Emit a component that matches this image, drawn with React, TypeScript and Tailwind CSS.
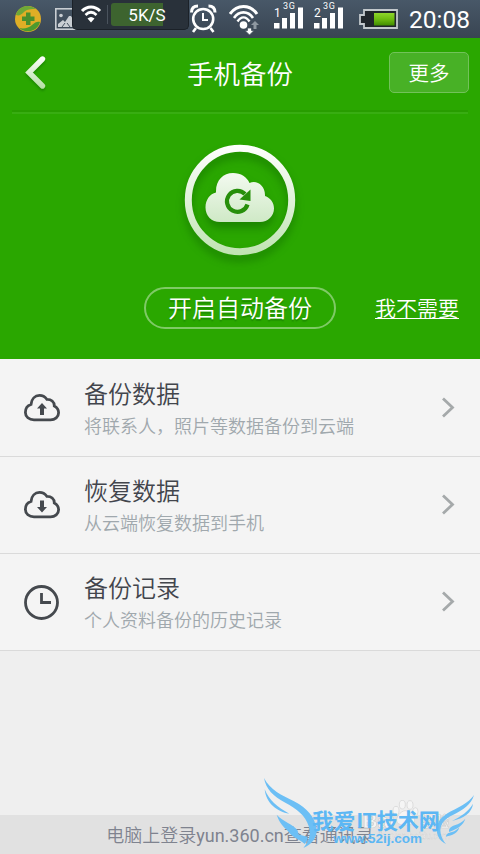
import React from 'react';

type IconName = 'upload' | 'download' | 'clock';

interface MenuItem {
  icon: IconName;
  title: string;
  description: string;
}

const menuItems: MenuItem[] = [
  { icon: 'upload', title: '备份数据', description: '将联系人，照片等数据备份到云端' },
  { icon: 'download', title: '恢复数据', description: '从云端恢复数据到手机' },
  { icon: 'clock', title: '备份记录', description: '个人资料备份的历史记录' },
];

const SignalBars: React.FC<{ sim: string }> = ({ sim }) => (
  <svg className="w-[30px] h-[38px] shrink-0" viewBox="0 0 30 38" fill="#fff">
    <text x="0" y="16.500" fontSize="12" fontFamily="Roboto, sans-serif">
      {sim}
    </text>
    <text x="9" y="9" fontSize="9" letterSpacing="0.8" fontFamily="Roboto, sans-serif">
      3G
    </text>
    <rect x="0" y="23" width="5.5" height="5.5" />
    <rect x="8" y="18" width="5" height="10.5" />
    <rect x="16" y="13" width="5" height="15.5" />
    <rect x="24" y="7.5" width="5" height="21" />
  </svg>
);

const StatusBar = () => (
  <div className="relative h-[38px] shrink-0 bg-gradient-to-b from-[#485868] to-[#394552] text-white flex items-start">
    {/* 360 shield */}
    <svg className="ml-[15px] w-[26px] h-[38px] shrink-0" viewBox="0 0 26 38">
      <circle cx="13" cy="19" r="13" fill="#dfae26" />
      <path d="M1 15C3 7 12 3 21 9C16 9 12 9 9 12C6 15 4 16 1 15Z" fill="#6ea838" />
      <path d="M25 22C23 30 13 35 4 28C9 29 14 28 17 25C20 22 23 21 25 22Z" fill="#4b9a2e" />
      <path d="M11 12.500h4.500v4h4v4.500h-4v4h-4.500v-4h-4v-4.500h4Z" fill="#4a8f2c" />
    </svg>
    <svg className="ml-[14px] w-[22px] h-[38px] shrink-0" viewBox="0 0 22 38">
      <rect x="0.8" y="8.8" width="20.4" height="20.4" fill="none" stroke="#c9ced3" strokeWidth="1.6" />
      <circle cx="6" cy="15.5" r="1.8" fill="#c9ced3" />
      <path d="M3 27V24L8 20L10 22L14 16L16 16L19 21V27Z" fill="#c9ced3" />
      <path d="M7 27l3-4M12 23l3 4" stroke="#465361" strokeWidth="1" />
    </svg>

    {/* Alarm */}
    <svg className="ml-[113px] w-[27px] h-[38px] shrink-0" viewBox="0 0 27 38" fill="none" stroke="#fff">
      <circle cx="13.2" cy="19" r="10" strokeWidth="2.6" />
      <path d="M13 13v7h5" strokeWidth="2" />
      <path d="M1.5 12.5C1.5 8 4 6 8 6M25 12.5C25 8 22.500 6 18.500 6" strokeWidth="3" />
      <path d="M6 28L3 32M20.500 28L23.500 32" strokeWidth="2.6" />
    </svg>

    {/* Wifi with transfer arrows */}
    <svg className="ml-[12px] w-[30px] h-[38px] shrink-0" viewBox="0 0 30 38" fill="none" stroke="#fff">
      <path d="M1 14C8 4 21 4 28 14" strokeWidth="3" />
      <path d="M5 18C10 10.500 19 10.500 24 18" strokeWidth="2.6" />
      <path d="M8.500 21.500C12 16 17 16 20.500 21.500" strokeWidth="2.400" />
      <circle cx="14.500" cy="25" r="3.800" fill="#fff" stroke="none" />
      <path d="M18.500 28h4v2.500h2.500l-4.500 4.500l-4.500-4.500h2.500Z" fill="#fff" stroke="#465361" strokeWidth="0.800" />
      <path d="M24.500 29v-4h-2.500l4-4l4 4h-2.500v4Z" fill="#8e98a1" stroke="none" />
    </svg>

    <div className="ml-[15px] flex gap-[10px]">
      <SignalBars sim="1" />
      <SignalBars sim="2" />
    </div>

    {/* Battery */}
    <svg className="ml-[15px] w-[40px] h-[38px] shrink-0" viewBox="0 0 40 38">
      <defs>
        <linearGradient id="charge" x1="0" y1="0" x2="0" y2="1">
          <stop offset="0" stopColor="#8fd62b" />
          <stop offset="0.5" stopColor="#6dbb10" />
          <stop offset="1" stopColor="#408c00" />
        </linearGradient>
      </defs>
      <path d="M5 10h33v18H5v-4H1v-9h4Z" fill="#20262b" stroke="#c2c8cc" strokeWidth="1.8" />
      <rect x="15" y="13" width="20.500" height="12.500" fill="url(#charge)" />
    </svg>

    <span className="ml-[10px] font-[Roboto] text-[24.500px] leading-[40px] whitespace-nowrap">20:08</span>

    {/* Floating network speed meter */}
    <div className="absolute left-[72px] top-0 w-[117px] h-[30px] rounded-b-[5px] border border-t-0 border-[#1b2128] bg-[#29313a] flex items-start">
      <svg className="ml-[7px] mt-[4px] w-[22px] h-[20px]" viewBox="0 0 22 20" fill="none" stroke="#fff">
        <path d="M2 7C7 1.500 15 1.500 20 7" strokeWidth="3" />
        <path d="M5.500 11C9 7.500 13 7.500 16.500 11" strokeWidth="2.600" />
        <path d="M7.500 14.500C10 12.500 12 12.500 14.500 14.500L11 18.500Z" fill="#fff" stroke="none" />
      </svg>
      <div className="ml-[5px] mt-[5px] h-[19px] w-px bg-[#4a535d]" />
      <div className="ml-[3px] mt-[3px] h-[23px] w-[73px] rounded-[3px] bg-gradient-to-r from-[#3d642f] from-[71%] to-[#29313a] to-[71%] pr-px text-center font-[Roboto] text-[17px] leading-[25px]">
        5K/S
      </div>
    </div>
  </div>
);

const Header = () => (
  <header className="h-[76px] grid grid-cols-[1fr_auto_1fr] items-start text-white">
    <svg className="ml-[20px] mt-[12px] w-[32px] h-[48px]" viewBox="0 0 32 48">
      <defs>
        <linearGradient id="arrow" gradientUnits="userSpaceOnUse" x1="0" y1="6" x2="0" y2="38">
          <stop offset="0" stopColor="#fff" />
          <stop offset="1" stopColor="#b5dfa5" />
        </linearGradient>
      </defs>
      <path
        d="M22.500 9L9 22.500L22.500 36"
        fill="none"
        stroke="url(#arrow)"
        strokeWidth="5.400"
        strokeLinecap="round"
        className="drop-shadow-[0_2px_1px_rgba(0,80,0,0.35)]"
      />
    </svg>
    <h1 className="text-[26.500px] leading-[73px] font-[350]">手机备份</h1>
    <button className="mr-[11px] mt-[14px] w-[80px] h-[41px] justify-self-end rounded-[5px] border border-[#72c25a] bg-[#48b126] text-[20.500px] leading-[43px] font-[350]">
      更多
    </button>
  </header>
);

const CloudSyncBadge = () => (
  <svg className="mx-auto block w-[140px] h-[140px] shrink-0" viewBox="0 0 140 140">
    <defs>
      <linearGradient id="ring" gradientUnits="userSpaceOnUse" x1="0" y1="15" x2="0" y2="126">
        <stop offset="0" stopColor="#fff" />
        <stop offset="1" stopColor="#bfe3b1" />
      </linearGradient>
      <linearGradient id="cloud" gradientUnits="userSpaceOnUse" x1="0" y1="43" x2="0" y2="92">
        <stop offset="0" stopColor="#f3faf0" />
        <stop offset="1" stopColor="#cfe9c6" />
      </linearGradient>
    </defs>
    <circle
      cx="70"
      cy="70"
      r="51.700"
      fill="none"
      stroke="url(#ring)"
      strokeWidth="7"
      className="drop-shadow-[0_6px_4px_rgba(0,70,0,0.35)]"
    />
    <path
      d="M50 92C41.500 92 35.500 86 35.500 77.500C35.500 69.500 40 64 46 62.500C45.500 50.500 53 43 63 43C71 43 77 47 79.500 53C87 49.500 95.500 56 95 66C100.500 68 104 72.500 104 78.500C104 86 98 92 90 92Z"
      fill="url(#cloud)"
      className="drop-shadow-[0_6px_4px_rgba(0,70,0,0.35)]"
    />
    <path d="M75 64A10.500 10.500 0 1 0 77.500 74.500" fill="none" stroke="#278f0b" strokeWidth="4.200" />
    <path d="M80.500 59.500V71L69.500 69.500Z" fill="#278f0b" />
  </svg>
);

const RowIcon: React.FC<{ name: IconName }> = ({ name }) => {
  if (name === 'clock') {
    return (
      <svg className="w-[36px] h-[36px]" viewBox="0 0 36 36" fill="none" stroke="#45494e">
        <circle cx="17.500" cy="18.500" r="16" strokeWidth="2.800" />
        <path d="M17.500 9V18.500H27" strokeWidth="2.800" />
      </svg>
    );
  }
  return (
    <svg className="w-[36px] h-[36px]" viewBox="0 0 36 36" fill="none">
      <path
        d="M10 29.800C5 29.800 1.400 26.700 1.400 22.500C1.400 18.500 3.500 15.500 7 14.500C7.500 9 11 5.400 15.500 5.400C18.800 5.400 21 6.800 22.800 9.300C27 9 30.500 12 30.300 16C33 17.500 34.600 19.500 34.600 22.700C34.600 27 31 29.800 26.500 29.800Z"
        stroke="#45494e"
        strokeWidth="2.800"
      />
      {name === 'upload' ? (
        <path d="M18 13L23 18.500H20V25H16V18.500H13Z" fill="#45494e" />
      ) : (
        <path d="M18 25.500L23 20H20V13.500H16V20H13Z" fill="#45494e" />
      )}
    </svg>
  );
};

const MenuRow: React.FC<{ item: MenuItem }> = ({ item }) => (
  <li className="h-[97px] flex items-center border-b border-[#dadada] pl-[24px] pr-[25px]">
    <RowIcon name={item.icon} />
    <div className="ml-[24px] flex-1 font-[350]">
      <p className="text-[24px] leading-[36px] text-[#42454c]">{item.title}</p>
      <p className="text-[18px] leading-[27px] text-[#a0a8ad]">{item.description}</p>
    </div>
    <svg className="w-[14px] h-[22px]" viewBox="0 0 14 22" fill="none" stroke="#a5a9aa" strokeWidth="2.800">
      <path d="M2 1.500L11.500 10.500L2 19.500" />
    </svg>
  </li>
);

const Watermark = () => (
  <svg className="absolute right-0 bottom-0 w-[230px] h-[84px]" viewBox="0 0 690 252">
    <g fill="#f6f6f6" stroke="#cdcdcd" strokeWidth="2" opacity="0.9">
      <ellipse cx="438" cy="122" rx="9" ry="13" />
      <ellipse cx="457" cy="104" rx="9" ry="13" />
      <ellipse cx="480" cy="105" rx="9" ry="13" />
      <ellipse cx="496" cy="125" rx="8" ry="12" />
      <path d="M466 122C480 122 500 144 492 158C484 168 450 168 442 158C434 144 452 122 466 122Z" />
      <g fontFamily="'Liberation Sans', 'Noto Sans CJK SC', sans-serif">
        <text x="338" y="173" fontSize="62" fontWeight="700">Bai</text>
        <text x="510" y="170" fontSize="44" fontWeight="700">经验</text>
        <text x="385" y="207" fontSize="28" strokeWidth="1" textLength="215">jingyan.baidu.com</text>
      </g>
    </g>
    <g fill="#6cbff5">
      <path d="M42 24C60 60 96 76 132 94C174 116 194 142 200 178C202 203 185 224 160 234C176 214 184 194 176 168C166 136 140 116 106 98C70 79 48 58 42 24Z" />
      <path d="M44 58C58 92 80 110 118 131C82 126 48 100 44 58Z" />
      <path d="M80 134C100 156 126 160 142 180C146 188 146 196 142 202C132 190 96 182 80 134Z" />
      <path d="M108 174C124 190 150 194 172 200C174 208 170 216 164 222C152 208 122 204 108 174Z" />
      <path d="M672 75C664 104 638 120 610 134C580 148 568 166 572 190C575 204 580 214 588 222C566 212 556 190 562 166C570 138 596 128 622 114C646 102 660 92 672 75Z" />
      <path d="M669 101C666 128 642 144 606 153C634 138 654 126 669 101Z" />
      <path d="M646 146C640 166 622 176 598 186C594 178 602 170 614 166C626 162 638 156 646 146Z" />
      <path d="M628 172C624 190 606 196 588 200C588 192 596 188 606 186C616 184 622 178 628 172Z" />
    </g>
    <g fill="#5cb7f4" fontFamily="'Liberation Sans', 'Noto Sans CJK SC', sans-serif" fontWeight="700">
      <text x="186" y="176" fontSize="65" textLength="130" lengthAdjust="spacingAndGlyphs">我爱</text>
      <text x="320" y="174" fontSize="66" textLength="58" lengthAdjust="spacingAndGlyphs">IT</text>
      <text x="380" y="176" fontSize="65" textLength="190" lengthAdjust="spacingAndGlyphs">技术网</text>
      <text x="250" y="219" fontSize="36" textLength="266" lengthAdjust="spacingAndGlyphs">www.52ij.com</text>
    </g>
  </svg>
);

export default function App() {
  return (
    <div
      lang="zh-CN"
      className="relative w-[480px] h-[854px] overflow-hidden flex flex-col bg-[#efefef] font-[Roboto,'Noto_Sans_CJK_SC',sans-serif]"
    >
      <StatusBar />
      <section className="h-[321px] shrink-0 bg-[#2aa700]">
        <Header />
        <div className="mx-[12px] -mt-[4px] h-[4px] border-t-2 border-b-2 border-t-[#289d00] border-b-[#38ad12]" />
        <div className="mt-[16px]">
          <CloudSyncBadge />
        </div>
        <div className="mt-[17px] grid grid-cols-[1fr_auto_1fr] items-center text-white font-[350]">
          <button className="col-start-2 w-[192px] h-[42px] rounded-full border-2 border-[#7fca66] text-[24px] leading-[40px] [text-shadow:0_2px_1px_rgba(0,80,0,0.3)]">
            开启自动备份
          </button>
          <a className="mr-[21px] mt-[2px] justify-self-end text-[21px] leading-[30px] underline decoration-1 underline-offset-2">
            我不需要
          </a>
        </div>
      </section>

      <ul className="bg-[#f4f4f4] pt-px">
        {menuItems.map((item) => (
          <MenuRow key={item.title} item={item} />
        ))}
      </ul>

      <footer className="mt-auto h-[39px] bg-[#e1e1e1] text-center text-[18px] leading-[42px] font-[350] text-[#7f838f]">
        电脑上登录<span className="font-normal">yun.360.cn</span>查看通讯录
      </footer>
      <Watermark />
    </div>
  );
}
